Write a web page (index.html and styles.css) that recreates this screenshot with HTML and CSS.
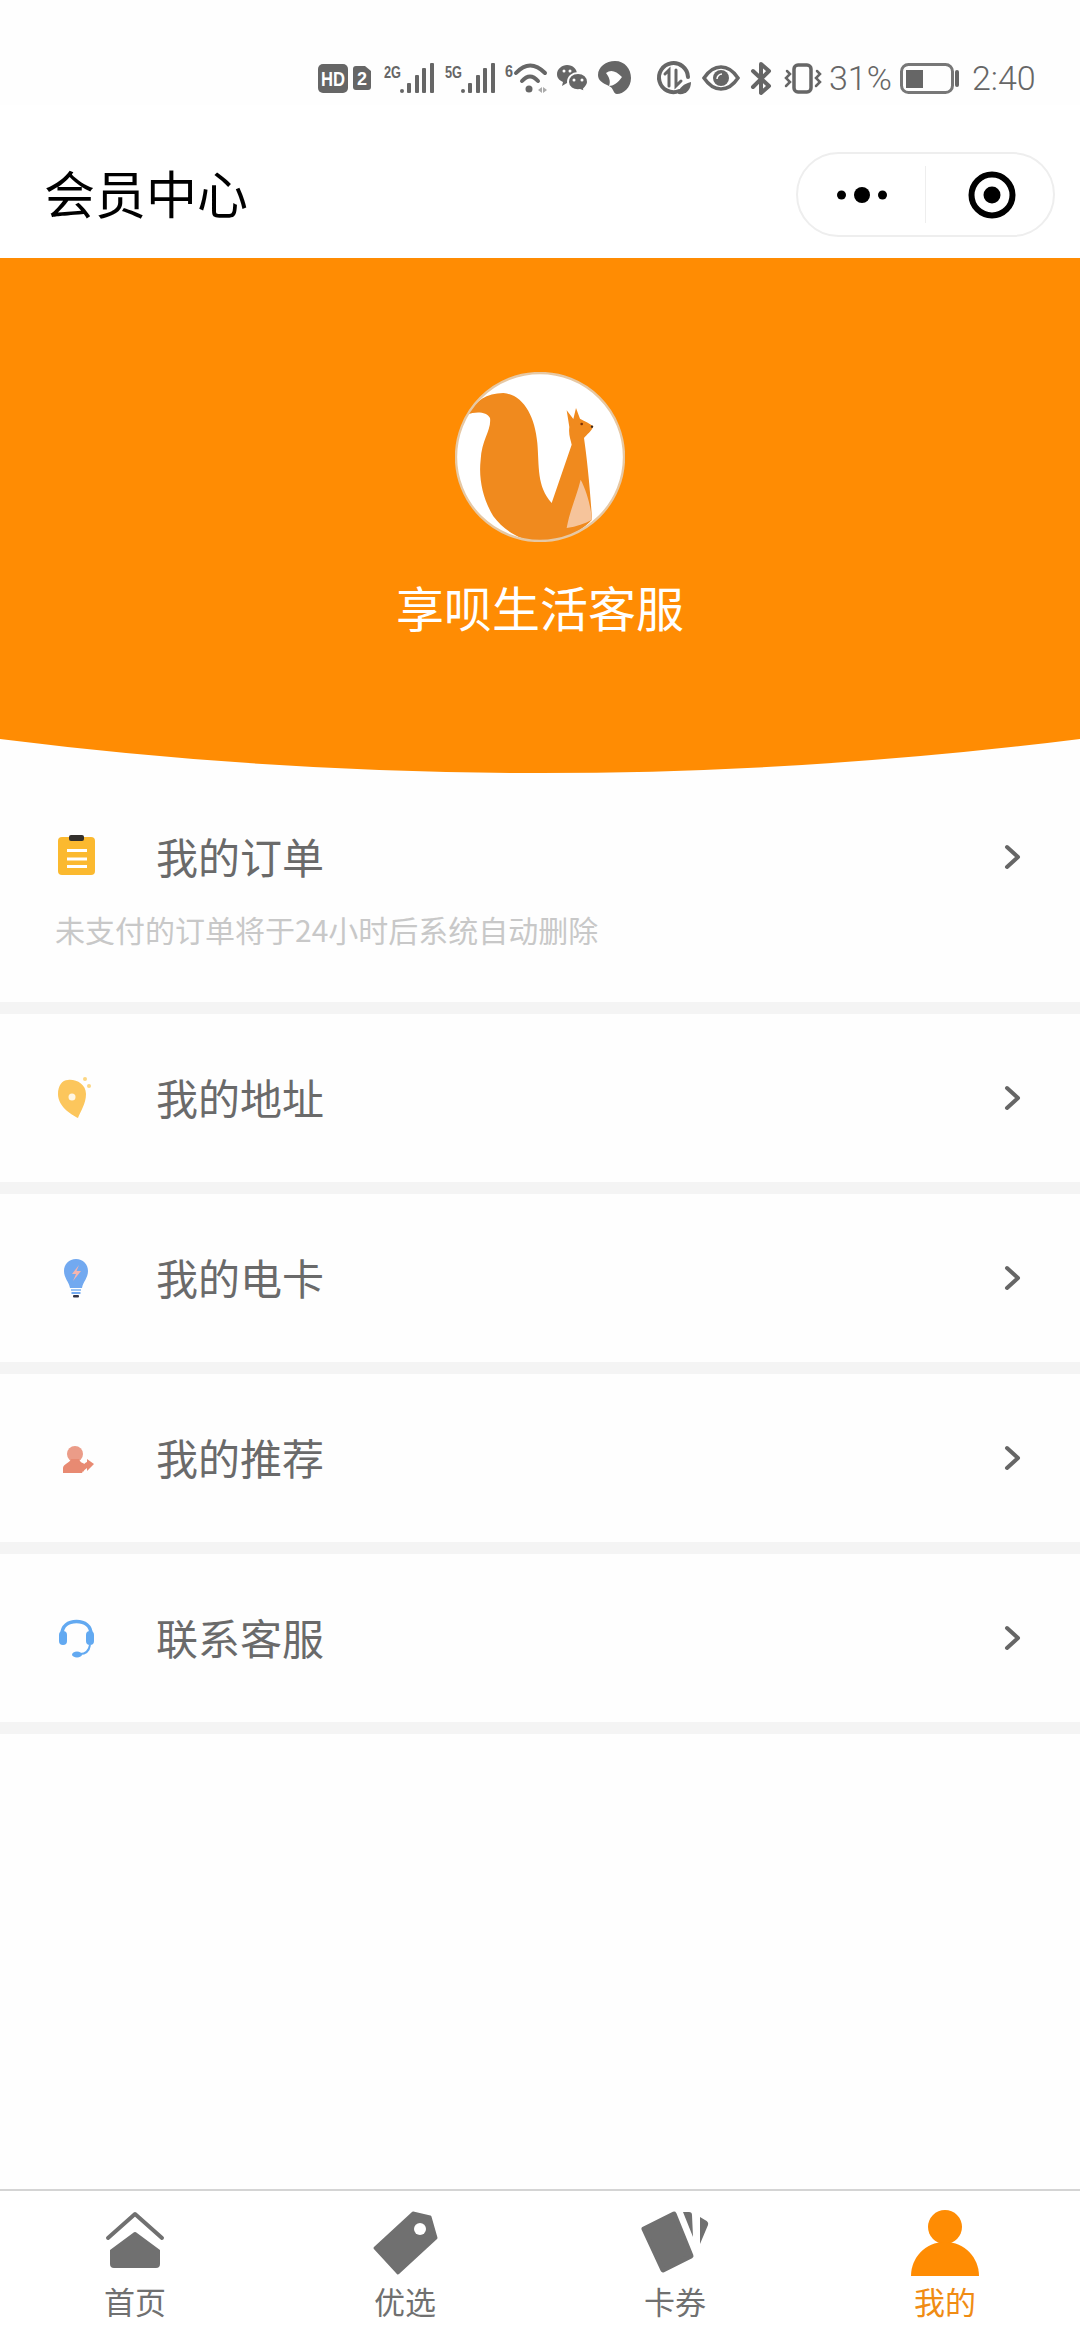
FILE: index.html
```html
<!DOCTYPE html>
<html lang="zh-CN">
<head>
<meta charset="utf-8">
<title>会员中心</title>
<link rel="stylesheet" href="styles.css">
</head>
<body>
<div class="page">
  <div class="status">
    <svg class="st ml0" width="30" height="29" viewBox="0 0 30 29"><rect width="30" height="29" rx="5" class="f"/><text x="15" y="22" text-anchor="middle" class="hd" textLength="24" lengthAdjust="spacingAndGlyphs">HD</text></svg>
    <svg class="st ml5" width="18" height="24" viewBox="0 0 18 24"><path class="f" d="M3 0H12L18 5V21Q18 24 15 24H3Q0 24 0 21V3Q0 0 3 0Z"/><text x="9" y="19" text-anchor="middle" class="hd2">2</text></svg>
    <svg class="st ml13" width="50" height="31" viewBox="0 0 50 31"><text x="0" y="15" class="net" textLength="17" lengthAdjust="spacingAndGlyphs">2G</text><g class="f"><rect x="16" y="26" width="4" height="4" rx="2"/><rect x="23" y="20" width="4" height="10" rx="1"/><rect x="31" y="12" width="4" height="18" rx="1"/><rect x="38" y="5" width="4" height="25" rx="1"/><rect x="46" y="0" width="4" height="30" rx="1"/></g></svg>
    <svg class="st ml11" width="50" height="31" viewBox="0 0 50 31"><text x="0" y="15" class="net" textLength="17" lengthAdjust="spacingAndGlyphs">5G</text><g class="f"><rect x="16" y="26" width="4" height="4" rx="2"/><rect x="23" y="20" width="4" height="10" rx="1"/><rect x="31" y="12" width="4" height="18" rx="1"/><rect x="38" y="5" width="4" height="25" rx="1"/><rect x="46" y="0" width="4" height="30" rx="1"/></g></svg>
    <svg class="st ml10" width="42" height="31" viewBox="0 0 42 31"><text x="0" y="14" class="net" textLength="8" lengthAdjust="spacingAndGlyphs">6</text><path class="s" stroke-width="4" d="M11 10Q25-5 40 10"/><path class="s" stroke-width="4" d="M17 18Q25 9 33 18"/><circle class="f" cx="24" cy="26" r="3.500"/><path d="M33 27l4-3v6zM38 24l4 3-4 3z" fill="#aaa"/></svg>
    <svg class="st ml10" width="32" height="28" viewBox="0 0 32 28"><path class="f" d="M10 1C16 1 20 5 20 10C20 15 16 19 10 19L5 22L6 18C2 16 0 14 0 10C0 5 5 1 10 1Z"/><path class="f stw" d="M21 9C27 9 31 13 31 18C31 21 29 23 27 25L28 28L23 26C16 27 11 23 11 18C11 13 15 9 21 9Z"/><g fill="#fff"><circle cx="7" cy="7" r="1.500"/><circle cx="13" cy="7" r="1.500"/><circle cx="17" cy="16" r="1.500"/><circle cx="25" cy="16" r="1.500"/></g></svg>
    <svg class="st ml8" width="35" height="34" viewBox="0 0 35 34"><path class="f" d="M18 0C28 0 34 8 34 17C34 27 26 33 20 33C16 33 17 27 12 25C5 22 1 19 1 14C1 6 9 0 18 0Z"/><path fill="#fff" d="M9 12C14 8 19 10 25 16C21 22 16 25 12 25C14 20 12 16 9 12Z"/></svg>
    <svg class="st ml25" width="34" height="34" viewBox="0 0 34 34"><path class="s" stroke-width="4" d="M22 30A14.500 14.500 0 1 1 31 16"/><path class="s" stroke-width="3" stroke-linecap="butt" d="M8 13L12 9V25M19 9V25L24 20"/><path class="f" d="M21 33C22 26 27 23 34 21C34 29 29 34 21 33Z"/></svg>
    <svg class="st ml11" width="38" height="26" viewBox="0 0 38 26"><path class="s" stroke-width="3.500" d="M2 13C8 4 14 2 19 2C24 2 30 4 36 13C30 22 24 24 19 24C14 24 8 22 2 13Z"/><circle class="f" cx="19" cy="13" r="8"/><path d="M15 14A5 5 0 0 1 20 9" stroke="#fff" stroke-width="1.500" fill="none"/></svg>
    <svg class="st ml11" width="20" height="33" viewBox="0 0 20 33"><path class="s" stroke-width="4" stroke-linejoin="round" d="M2 9L18 24L10 31V2L18 9L2 25"/></svg>
    <svg class="st ml13" width="37" height="31" viewBox="0 0 37 31"><rect class="s" stroke-width="3.500" x="10" y="2" width="17" height="27" rx="4"/><path class="s" stroke-width="2.500" d="M3 8L6 11L2 15L6 19L2 23M33 8L36 11L32 15L36 19L32 23"/></svg>
    <span class="st-text pct ml8">31%</span>
    <svg class="st ml7" width="59" height="31" viewBox="0 0 59 31"><rect x="1.500" y="1.500" width="51" height="28" rx="7" fill="none" stroke="#777" stroke-width="3"/><rect class="f" x="6" y="7" width="17" height="18"/><rect class="f" x="55" y="7" width="4" height="17" rx="2"/></svg>
    <span class="st-text time ml13">2:40</span>
  </div>

  <header class="nav">
    <h1 class="nav-title">会员中心</h1>
    <div class="capsule">
      <div class="cap-cell">
        <svg width="50" height="16" viewBox="0 0 50 16"><g fill="#000"><circle cx="4.500" cy="8" r="4.500"/><circle cx="25" cy="8" r="8"/><circle cx="45.500" cy="8" r="4.500"/></g></svg>
      </div>
      <div class="cap-cell cap-right">
        <svg width="48" height="48" viewBox="0 0 48 48"><circle cx="24" cy="24" r="20.500" fill="none" stroke="#000" stroke-width="6"/><circle cx="24" cy="24" r="8.500" fill="#000"/></svg>
      </div>
    </div>
  </header>

  <section class="hero">
    <div class="hero-body">
      <svg class="avatar" width="170" height="170" viewBox="225 97 510 510">
        <circle cx="480" cy="352" r="252" fill="#fff"/>
        <path fill="#f08a1e" d="M262 225C285 185 320 160 370 160C430 165 465 230 472 310C478 380 470 440 515 490L575 315C572 300 565 285 568 262L560 212L580 238L588 205L600 237C615 245 630 252 640 260C635 275 620 285 612 295C620 350 630 440 636 540C590 590 520 605 480 605C420 605 370 570 340 530C310 480 295 420 302 360C305 300 335 270 330 235C320 215 285 215 262 225Z"/>
        <path fill="#f6c49b" d="M602 420C590 470 570 510 560 565C590 560 615 552 636 540C632 495 618 450 602 420Z"/>
        <circle cx="605" cy="253" r="4" fill="#7a3208"/>
        <circle cx="636" cy="261" r="3.500" fill="#3a2a20"/>
        <circle cx="480" cy="352" r="252" fill="none" stroke="#e6c8a4" stroke-width="7"/>
      </svg>
      <div class="hero-name">享呗生活客服</div>
    </div>
    <svg class="hero-curve" width="1080" height="34" viewBox="0 0 1080 34" preserveAspectRatio="none"><path fill="#ff8c03" d="M0 0H1080Q540 68 0 0Z"/></svg>
  </section>

  <main class="list">
    <div class="item item-first">
      <div class="item-head">
        <svg class="item-icon" width="44" height="44" viewBox="0 0 44 44"><rect x="2" y="2" width="37" height="38" rx="4" fill="#fbb92f"/><rect x="13" y="0" width="15" height="6" rx="2" fill="#33302c"/><g fill="#fff"><rect x="11" y="14" width="20" height="3"/><rect x="11" y="22.500" width="20" height="3"/><rect x="11" y="30" width="20" height="3"/></g></svg>
        <span class="item-title">我的订单</span>
        <svg class="chev" width="17" height="26" viewBox="0 0 17 26"><path d="M3 3L14 13L3 23"/></svg>
      </div>
      <p class="item-note">未支付的订单将于24小时后系统自动删除</p>
    </div>
    <div class="item">
      <div class="item-head">
        <svg class="item-icon" width="44" height="44" viewBox="0 0 44 44"><path fill="#fcc65c" d="M12 4C20 3 30 8 30 18C30 28 24 36 22 42C14 38 2 30 2 18C2 10 6 4 12 4Z"/><circle cx="16" cy="21" r="3.500" fill="#fff6e2"/><circle cx="29" cy="3" r="2" fill="#fcd682"/><circle cx="33" cy="10" r="2" fill="#fcd682"/></svg>
        <span class="item-title">我的地址</span>
        <svg class="chev" width="17" height="26" viewBox="0 0 17 26"><path d="M3 3L14 13L3 23"/></svg>
      </div>
    </div>
    <div class="item">
      <div class="item-head">
        <svg class="item-icon" width="44" height="44" viewBox="0 0 44 44"><path fill="#72a9f0" d="M20 3C13 3 8 8 8 15C8 22 13 26 14 32H26C27 26 32 22 32 15C32 8 27 3 20 3Z"/><path fill="#f5b5b0" d="M23 9L16 18H20L17 25L25 15H20.500Z"/><rect x="15" y="33" width="10" height="2" fill="#9cc4f4"/><rect x="15.500" y="36" width="9" height="2" fill="#72a9f0"/><rect x="17" y="39" width="6" height="2.500" rx="1" fill="#334"/></svg>
        <span class="item-title">我的电卡</span>
        <svg class="chev" width="17" height="26" viewBox="0 0 17 26"><path d="M3 3L14 13L3 23"/></svg>
      </div>
    </div>
    <div class="item">
      <div class="item-head">
        <svg class="item-icon" width="44" height="44" viewBox="0 0 44 44"><circle cx="19" cy="18" r="8" fill="#eb9c88"/><path fill="#e88a72" d="M7 37V32C7 28 14 27 15 23H23C24 27 28 27 30 29L26 37Z"/><path fill="#e88a72" d="M38 28L31 23V26C28 27 26 31 27 36C29 33 31 32 31 32V35Z"/></svg>
        <span class="item-title">我的推荐</span>
        <svg class="chev" width="17" height="26" viewBox="0 0 17 26"><path d="M3 3L14 13L3 23"/></svg>
      </div>
    </div>
    <div class="item">
      <div class="item-head">
        <svg class="item-icon" width="44" height="44" viewBox="0 0 44 44"><path d="M6 20V18C6 10 12 5.500 20.500 5.500C29 5.500 35 10 35 18V20" fill="none" stroke="#62a9f1" stroke-width="3.500"/><rect x="3" y="15" width="8" height="14" rx="4" fill="#62a9f1"/><rect x="30" y="15" width="8" height="14" rx="4" fill="#62a9f1"/><path d="M34 29C33 35 29 38 24 38" fill="none" stroke="#62a9f1" stroke-width="2"/><ellipse cx="21" cy="38.500" rx="5" ry="3" fill="#62a9f1"/></svg>
        <span class="item-title">联系客服</span>
        <svg class="chev" width="17" height="26" viewBox="0 0 17 26"><path d="M3 3L14 13L3 23"/></svg>
      </div>
    </div>
  </main>

  <nav class="tabs">
    <div class="tab">
      <svg width="70" height="66" viewBox="0 0 70 66"><path d="M8 28L35 4L62 28" fill="none" stroke="#707070" stroke-width="4" stroke-linecap="round" stroke-linejoin="round"/><path fill="#707070" d="M33 23Q35 21 37 23L60 40V54Q60 58 56 58H14Q10 58 10 54V40Z"/></svg>
      <span class="tab-label">首页</span>
    </div>
    <div class="tab">
      <svg width="70" height="66" viewBox="0 0 70 66"><path fill="#707070" stroke="#707070" stroke-width="3" stroke-linejoin="round" d="M43 3L60 7L66 28L28 63L5 38Z"/><circle cx="50" cy="19" r="6" fill="#fff"/></svg>
      <span class="tab-label">优选</span>
    </div>
    <div class="tab">
      <svg width="70" height="66" viewBox="0 0 70 66"><path fill="#707070" stroke="#707070" stroke-width="5" stroke-linejoin="round" d="M4 19L34 4L51 46L23 60Z"/><path fill="#707070" d="M43 2H49Q52 2 52 5L53 27ZM60 7L65 10Q69 12 68 15L60 34Z"/></svg>
      <span class="tab-label">卡券</span>
    </div>
    <div class="tab tab-active">
      <svg width="70" height="66" viewBox="0 0 70 66"><circle cx="35" cy="17" r="17" fill="#ff8c03"/><path fill="#ff8c03" d="M1 66C1 48 15 32 35 32C55 32 69 48 69 66Z"/></svg>
      <span class="tab-label">我的</span>
    </div>
  </nav>
</div>
</body>
</html>
```
FILE: styles.css
```css
* { box-sizing: border-box; }
html, body { margin: 0; padding: 0; }
body {
  background: #fefefe;
  font-family: "Noto Sans CJK SC", "Noto Sans", sans-serif;
}
.page {
  width: 1080px;
  height: 2340px;
  display: flex;
  flex-direction: column;
  overflow: hidden;
}

/* status bar */
.status {
  height: 105px;
  padding: 51px 45px 0 0;
  display: flex;
  justify-content: flex-end;
  align-items: center;
  color: #666;
}
.st { flex: none; display: block; overflow: visible; }
.f { fill: #666; }
.s { fill: none; stroke: #666; stroke-linecap: round; }
.stw { stroke: #fefefe; stroke-width: 2; }
.hd { font: 700 20px "Liberation Sans", sans-serif; fill: #fff; }
.hd2 { font: 700 18px "Liberation Sans", sans-serif; fill: #fff; }
.net { font: 700 16px "Liberation Sans", sans-serif; fill: #666; }
.st-text {
  font-family: Roboto, sans-serif;
  font-weight: 300;
  font-size: 34px;
  line-height: 40px;
  white-space: nowrap;
}
.pct { width: 64px; }
.time { width: 63px; }
.ml5 { margin-left: 5px; }
.ml7 { margin-left: 7px; }
.ml8 { margin-left: 8px; }
.ml10 { margin-left: 10px; }
.ml11 { margin-left: 11px; }
.ml13 { margin-left: 13px; }
.ml25 { margin-left: 25px; }

/* nav */
.nav {
  height: 153px;
  padding: 26px 25px 0 44px;
  display: flex;
  align-items: center;
  justify-content: space-between;
  background: #fff;
}
.nav-title {
  margin: 0 0 6px;
  font-size: 51px;
  font-weight: 400;
  line-height: 70px;
  color: #000;
}
.capsule {
  width: 259px;
  height: 85px;
  border: 2px solid #eeeeee;
  border-radius: 43px;
  display: flex;
  align-items: center;
}
.cap-cell {
  flex: 1;
  height: 57px;
  display: flex;
  align-items: center;
  justify-content: center;
}
.cap-right { border-left: 1px solid #eeeeee; flex: none; width: 128px; padding-left: 4px; }

/* hero */
.hero { flex: none; }
.hero-body {
  height: 481px;
  padding-top: 114px;
  background: #ff8c03;
  display: flex;
  flex-direction: column;
  align-items: center;
}
.avatar { display: block; flex: none; }
.hero-name {
  margin-top: 34px;
  font-size: 48px;
  line-height: 60px;
  color: #fff;
}
.hero-curve { display: block; }

/* list */
.list { flex: 1; }
.item {
  height: 180px;
  border-bottom: 12px solid #f4f4f4;
  padding: 54px 0 0 56px;
}
.item-first { height: 241px; padding-top: 54px; }
.item-head {
  height: 60px;
  display: flex;
  align-items: center;
}
.item-icon { flex: none; display: block; margin-right: 56px; }
.item-title {
  flex: 1;
  font-size: 42px;
  line-height: 58px;
  margin-bottom: 2px;
  color: #6a6a6a;
}
.chev {
  flex: none;
  margin-right: 59px;
  fill: none;
  stroke: #666;
  stroke-width: 4;
  stroke-linecap: round;
  stroke-linejoin: round;
}
.item-note {
  margin: 21px 0 0 -1px;
  font-size: 30px;
  line-height: 42px;
  color: #c8c8c8;
}

/* tab bar */
.tabs {
  flex: none;
  height: 151px;
  border-top: 2px solid #d4d4d4;
  padding-top: 19px;
  display: grid;
  grid-template-columns: repeat(4, 1fr);
  background: #fff;
}
.tab {
  display: flex;
  flex-direction: column;
  align-items: center;
}
.tab svg { display: block; }
.tab-label {
  margin-top: 5px;
  font-size: 31px;
  line-height: 40px;
  color: #707070;
}
.tab-active .tab-label { color: #f08c14; }
```
